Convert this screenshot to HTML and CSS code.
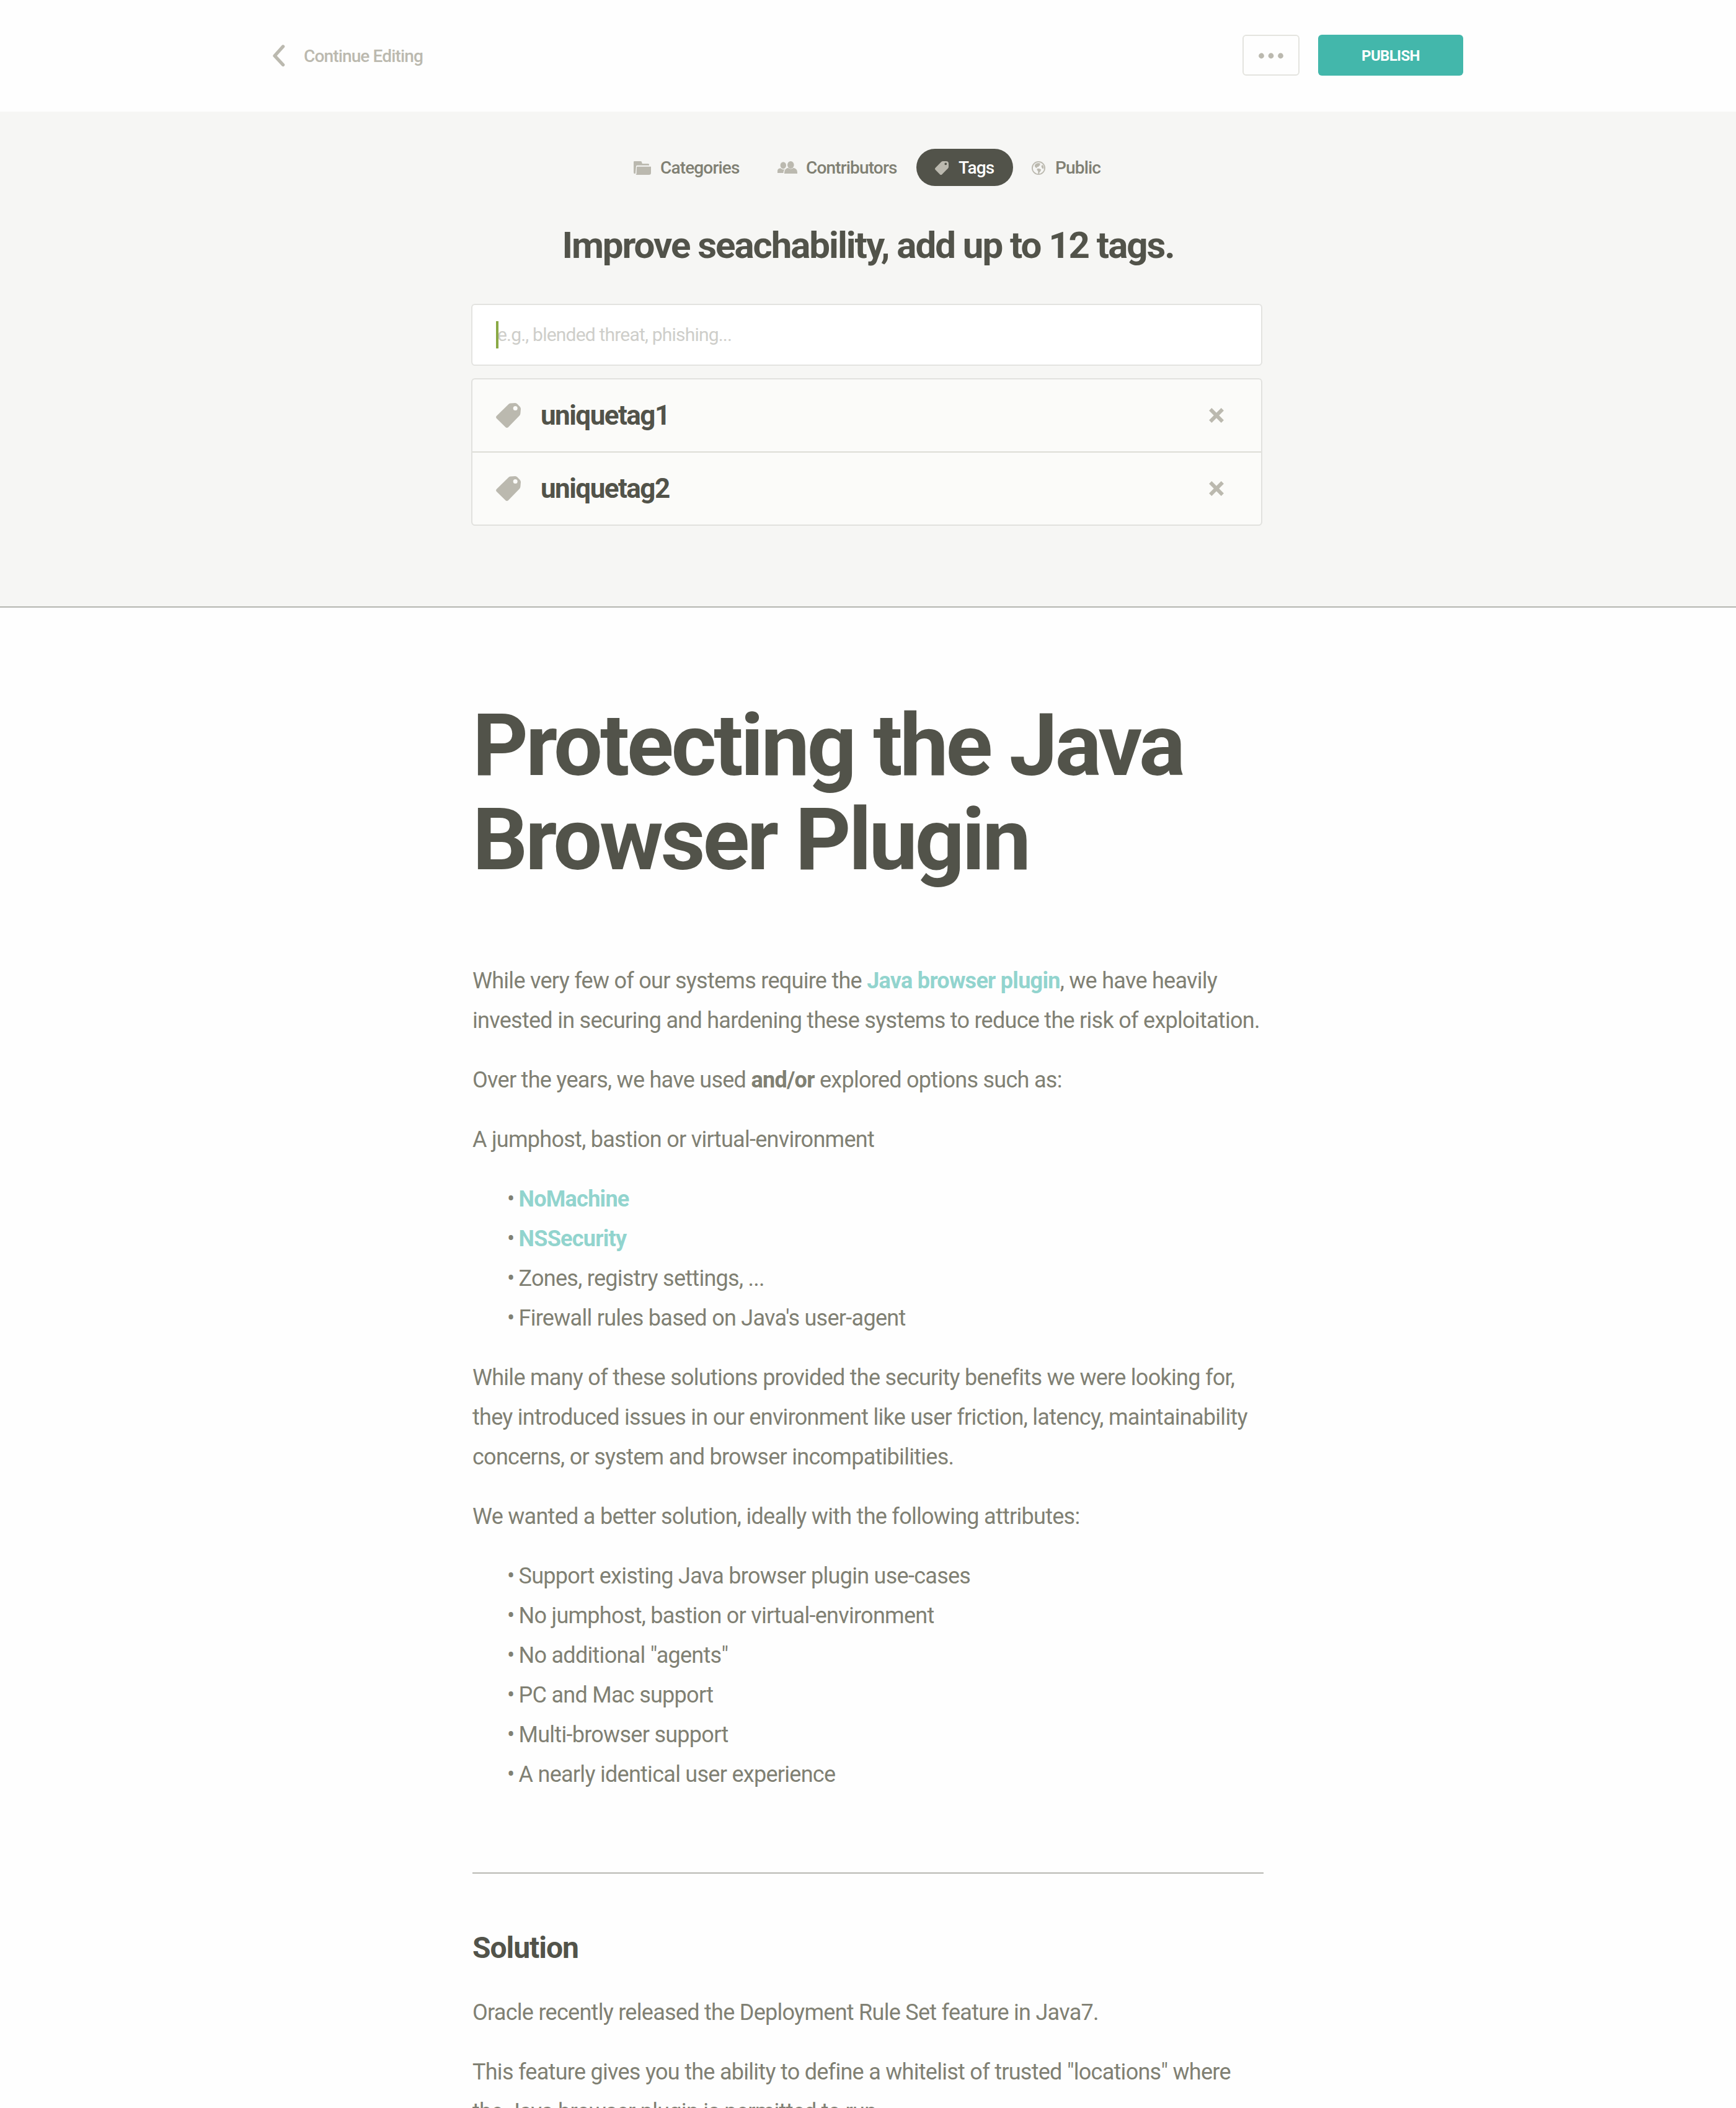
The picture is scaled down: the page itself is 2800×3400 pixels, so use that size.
FILE: index.html
```html
<!DOCTYPE html>
<html lang="en">
<head>
<meta charset="utf-8">
<title>Protecting the Java Browser Plugin</title>
<link rel="stylesheet" href="styles.css">
</head>
<body>
<svg class="defs" width="0" height="0" aria-hidden="true">
  <symbol id="tag" viewBox="0 0 40 40"><path fill-rule="evenodd" d="M20.2 1.9Q21.3.7 23 .6L31 0Q33 0 34.3 1.5L38.6 6Q40 7.5 40 9.5L39.4 16.8Q39.2 19 38 20.3L19.6 39.2Q17.5 40.8 15.6 39.2L.8 24.7Q-.7 22.7.8 20.9ZM31.2 4.9A3.5 3.6 0 1 0 31.2 12.1A3.5 3.6 0 1 0 31.2 4.9Z"/></symbol>
  <symbol id="cross" viewBox="0 0 24 24"><path d="M2.2 2.2L21.8 21.8M21.8 2.2L2.2 21.8" fill="none" stroke="currentColor" stroke-width="6"/></symbol>
</svg>

<header class="topbar">
  <a class="back">
    <svg class="back-icon" width="20" height="36" viewBox="0 0 20 36"><path d="M16.5 3L3 18L16.5 32.5" fill="none" stroke="currentColor" stroke-width="5.4" stroke-linecap="round" stroke-linejoin="round"/></svg>
    <span>Continue Editing</span>
  </a>
  <div class="actions">
    <button class="more" aria-label="More">
      <svg width="40" height="10" viewBox="0 0 40 10" fill="currentColor"><circle cx="4.5" cy="5" r="4.4"/><circle cx="20" cy="5" r="4.4"/><circle cx="35.5" cy="5" r="4.4"/></svg>
    </button>
    <button class="publish">PUBLISH</button>
  </div>
</header>

<section class="settings">
  <nav class="tabs">
    <a class="tab tab-categories">
      <svg width="28" height="22" viewBox="0 0 28 22" fill="currentColor"><path d="M0 1.2Q0 0 1.2 0H11.2Q12.6 0 13 1.2L13.9 3.9H23.5Q25 3.9 25 5.4V6.8H5.6Q4.2 6.8 4 8.2L3 19.5Q2.8 20.3 2 20.3Q0 20.3 0 18Z"/><path d="M5.8 8.7H28V18.8Q28 22 24.8 22H3.4Q4.4 21.4 4.5 20L5 9.6Q5.1 8.7 5.8 8.7Z"/></svg>
      <span>Categories</span>
    </a>
    <a class="tab tab-contributors">
      <svg width="32" height="20" viewBox="0 0 32 20" fill="currentColor"><ellipse cx="9.3" cy="6.7" rx="4.7" ry="5.5"/><ellipse cx="21.3" cy="6" rx="5.3" ry="6"/><path d="M0 19V15.5Q.3 11.8 4.8 11.3Q9 15 12.6 12.2Q9.7 14.2 9.5 19Z"/><path d="M11 20Q10.8 12 17 10.8Q21.5 14.2 26 10.8Q32 12 32 18V20Z"/></svg>
      <span>Contributors</span>
    </a>
    <a class="tab tab-tags active">
      <svg width="22" height="22" viewBox="0 0 22 22" fill="currentColor"><path fill-rule="evenodd" d="M10 1.3Q11.2 0 13 0H18Q22 0 22 4V9Q22 10.6 20.8 11.8L11.2 21.4Q9.6 22.6 8.2 21.4L.6 13.8Q-.6 12.2.7 10.7ZM17.3 2.4A1.9 1.9 0 1 0 17.3 6.2A1.9 1.9 0 1 0 17.3 2.4Z"/></svg>
      <span>Tags</span>
    </a>
    <a class="tab tab-public">
      <svg width="22" height="22" viewBox="0 0 22 22"><circle cx="11" cy="11" r="10.1" fill="none" stroke="currentColor" stroke-width="1.8"/><path fill="currentColor" d="M5 6Q7 3.2 10.5 3L14 3.6L13 5L14.2 6L11.8 7.4L10.8 9.2L8.6 9L8.8 11L6.6 10.4L5 8.6Z"/><path fill="currentColor" d="M9 12L12 11.8L15.2 13.6L14 16.4L12.6 18L12.2 20.6L10.4 20.4L10.2 16L8.4 14Z"/><path fill="currentColor" d="M16.8 5.6L18.6 7.4L19.6 11L18.2 12.4L16.6 11L15.6 8.6Z"/></svg>
      <span>Public</span>
    </a>
  </nav>

  <h2 class="prompt">Improve seachability, add up to 12 tags.</h2>

  <div class="tag-form">
    <div class="tag-input">
      <span class="caret"></span>
      <span class="placeholder">e.g., blended threat, phishing...</span>
    </div>
    <ul class="tag-list">
      <li class="tag-row">
        <svg class="tag-icon"><use href="#tag"/></svg>
        <span class="tag-name">uniquetag1</span>
        <svg class="remove"><use href="#cross"/></svg>
      </li>
      <li class="tag-row">
        <svg class="tag-icon"><use href="#tag"/></svg>
        <span class="tag-name">uniquetag2</span>
        <svg class="remove"><use href="#cross"/></svg>
      </li>
    </ul>
  </div>
</section>

<article class="article">
  <h1>Protecting the Java<br>Browser Plugin</h1>
  <p>While very few of our systems require the <a>Java browser plugin</a>, we have heavily<br>invested in securing and hardening these systems to reduce the risk of exploitation.</p>
  <p>Over the years, we have used <strong>and/or</strong> explored options such as:</p>
  <p>A jumphost, bastion or virtual-environment</p>
  <ul>
    <li><a>NoMachine</a></li>
    <li><a>NSSecurity</a></li>
    <li>Zones, registry settings, ...</li>
    <li>Firewall rules based on Java's user-agent</li>
  </ul>
  <p>While many of these solutions provided the security benefits we were looking for,<br>they introduced issues in our environment like user friction, latency, maintainability<br>concerns, or system and browser incompatibilities.</p>
  <p>We wanted a better solution, ideally with the following attributes:</p>
  <ul>
    <li>Support existing Java browser plugin use-cases</li>
    <li>No jumphost, bastion or virtual-environment</li>
    <li>No additional "agents"</li>
    <li>PC and Mac support</li>
    <li>Multi-browser support</li>
    <li>A nearly identical user experience</li>
  </ul>
  <hr>
  <h2>Solution</h2>
  <p>Oracle recently released the Deployment Rule Set feature in Java7.</p>
  <p>This feature gives you the ability to define a whitelist of trusted "locations" where<br>the Java browser plugin is permitted to run.</p>
</article>
</body>
</html>
```
FILE: styles.css
```css
* { box-sizing: border-box; }

html, body { margin: 0; padding: 0; }

body {
  height: 3400px;
  overflow: hidden;
  background: #fefefe;
  color: #808073;
  font-family: Roboto, "Liberation Sans", sans-serif;
}

h1, h2, p, ul { margin: 0; padding: 0; }
ul { list-style: none; }
svg { display: block; flex: none; }
.defs { position: absolute; }

/* Top bar */
.topbar {
  display: flex;
  align-items: center;
  justify-content: space-between;
  height: 180px;
  padding: 0 440px 2px;
}

.back {
  display: flex;
  align-items: center;
  gap: 30px;
  color: #bbb9af;
  font-size: 28px;
  font-weight: 500;
  letter-spacing: -0.86px;
}
.back-icon { margin-top: 2px; }
.back span { padding-top: 3px; }

.actions { display: flex; gap: 30px; }

.more, .publish {
  display: flex;
  align-items: center;
  justify-content: center;
  height: 66px;
  padding: 0;
  border-radius: 6px;
  font-family: inherit;
}
.more {
  width: 92px;
  border: 2px solid #e4e4df;
  background: #fefefe;
  color: #bbb9af;
}
.more svg { margin-top: 2px; }
.publish {
  width: 234px;
  padding-top: 1px;
  border: 0;
  background: #43b7ab;
  color: #fff;
  font-size: 24px;
  font-weight: 700;
  letter-spacing: -0.65px;
}

/* Settings panel */
.settings {
  height: 800px;
  padding-top: 60px;
  border-bottom: 2px solid #b4b5b0;
  background: #f6f6f4;
}

.tabs {
  display: grid;
  grid-template-columns: 232px 254px 156px 172px;
  justify-content: center;
  padding-right: 2px;
}
.tab {
  display: flex;
  align-items: center;
  gap: 16px;
  height: 60px;
  padding-left: 30px;
  border-radius: 30px;
  font-size: 28px;
  font-weight: 500;
  letter-spacing: -0.84px;
}
.tab svg { color: #bbb9af; margin-top: 2px; }
.tab-categories { gap: 15px; }
.tab-contributors { gap: 14px; }
.tab-contributors svg { margin-top: 0; }
.tab.active { background: #52534a; color: #fff; }

.prompt {
  margin: 60px 0 58px;
  color: #52534a;
  font-size: 60px;
  line-height: 72px;
  letter-spacing: -2.03px;
  text-align: center;
}

.tag-form {
  display: flex;
  flex-direction: column;
  gap: 20px;
  width: 1276px;
  margin-left: 760px;
}
.tag-input {
  display: flex;
  align-items: center;
  height: 100px;
  padding-left: 38px;
  border: 2px solid #e3e3e0;
  border-radius: 6px;
  background: #fff;
}
.caret { width: 4px; height: 44px; margin-right: -2px; background: #8aa945; z-index: 1; }
.placeholder {
  padding-bottom: 1px;
  color: #cececa;
  font-size: 30px;
  letter-spacing: -0.8px;
}

.tag-list {
  border: 2px solid #e1e1de;
  border-radius: 6px;
  background: #fbfbf9;
}
.tag-row {
  display: flex;
  align-items: center;
  height: 116px;
  padding: 0 60px 0 38px;
}
.tag-row + .tag-row { height: 118px; border-top: 2px solid #dcdcd6; }
.tag-icon { width: 40px; height: 40px; fill: #bbb9af; }
.tag-name {
  flex: 1;
  padding: 0 0 1px 32px;
  color: #52534a;
  font-size: 44px;
  font-weight: 700;
  letter-spacing: -1.53px;
}
.remove { width: 24px; height: 24px; color: #bbb9af; }

/* Article */
.article {
  width: 1290px;
  margin-left: 762px;
  padding-top: 146px;
  font-size: 36px;
  line-height: 64px;
  letter-spacing: -0.72px;
}
.article h1 {
  margin-bottom: 120px;
  color: #52534a;
  font-size: 140px;
  line-height: 152px;
  letter-spacing: -4.17px;
}
.article p, .article ul { margin-bottom: 32px; }
.article a { color: #92d4ce; font-weight: 700; }
.article strong { font-weight: 700; }
.article ul { padding-left: 56px; }
.article li::before {
  content: "•";
  display: inline-block;
  width: 18.5px;
}
.article hr {
  width: 1276px;
  height: 2px;
  margin: 126px 0 88px;
  border: 0;
  background: #b7b7b1;
}
.article h2 {
  margin-bottom: 40px;
  color: #52534a;
  font-size: 48px;
  line-height: 64px;
  letter-spacing: -1.04px;
}
```
